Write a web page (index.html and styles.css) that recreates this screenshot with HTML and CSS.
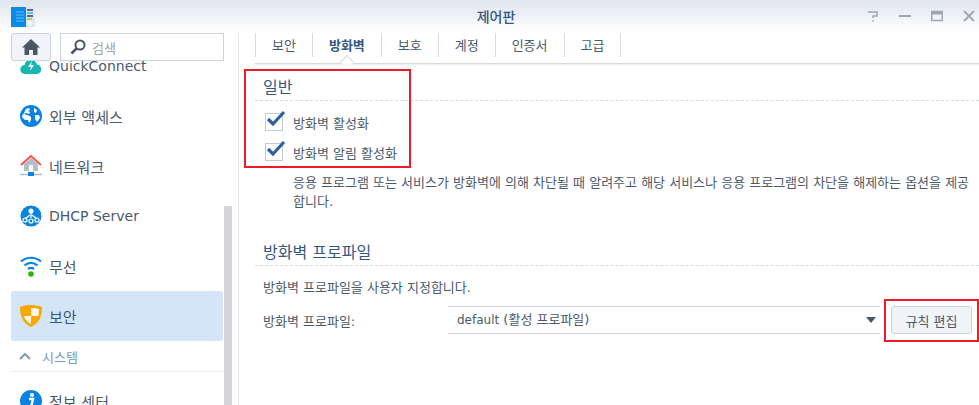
FILE: index.html
```html
<!DOCTYPE html>
<html>
<head>
  <meta charset="utf-8">
  <title>제어판</title>
  <link rel="stylesheet" href="styles.css">
</head>
<body>
  <div class="window">
    <header class="titlebar">
      <svg class="app-logo" width="24" height="20" viewBox="0 0 24 20">
        <rect x="0" y="0" width="15" height="20" fill="#0a8be8"/>
        <path d="M5 5h8M5 8h8M5 11h8M5 14h8" stroke="#5cc0fa" stroke-width="1"/>
        <rect x="15" y="0" width="9" height="20" fill="#dfe5ea"/>
        <path d="M16 3h6" stroke="#334" stroke-width="1.4"/>
        <path d="M16 6h6" stroke="#19b5ef" stroke-width="1.4"/>
        <path d="M16 9h6" stroke="#334" stroke-width="1.4"/>
        <path d="M16 12h5" stroke="#8c4" stroke-width="1.4"/>
        <circle cx="19" cy="16" r="2.6" fill="#f4f8fb"/>
      </svg>
      <div class="title">제어판</div>
      <div class="win-buttons">
        <svg width="12" height="12" viewBox="0 0 12 12"><path d="M1 2h9v4H6v2M6 10v1.500" fill="none" stroke="#a0a6ae" stroke-width="1.500"/></svg>
        <svg width="12" height="12" viewBox="0 0 12 12"><path d="M0 6h12" stroke="#a0a6ae" stroke-width="2"/></svg>
        <svg width="12" height="12" viewBox="0 0 12 12"><rect x="0.750" y="1.500" width="10.500" height="9" fill="none" stroke="#a0a6ae" stroke-width="1.500"/><path d="M0 3h12" stroke="#a0a6ae" stroke-width="3"/></svg>
        <svg width="12" height="12" viewBox="0 0 12 12"><path d="M1 1l10 10M11 1L1 11" stroke="#a0a6ae" stroke-width="1.800"/></svg>
      </div>
    </header>

    <div class="main">
      <aside class="sidebar">
        <div class="side-col">
          <div class="side-top">
            <button class="home-btn">
              <svg width="18" height="16" viewBox="0 0 18 16"><path d="M9 0L0 8.500h2.500V16h4.500v-5h4v5h4.500V8.500H18z" fill="#4c5662"/></svg>
            </button>
            <div class="search">
              <svg width="16" height="16" viewBox="0 0 16 16"><circle cx="10" cy="6" r="4.500" fill="none" stroke="#4c5662" stroke-width="2"/><path d="M6.500 9.500L1.500 14.500" stroke="#4c5662" stroke-width="2.600"/></svg>
              <span>검색</span>
            </div>
          </div>
          <ul class="nav">
            <li class="nav-item latin">
              <svg width="22" height="22" viewBox="0 0 22 22"><path d="M5 19a4.500 4.500 0 0 1-.5-9 6.500 6.500 0 0 1 12.500-.5 4.800 4.800 0 0 1 0 9.500z" fill="#14b8b0"/><path d="M12 6l-4 6h3l-1 4 4-6h-3z" fill="#fff"/></svg>
              QuickConnect
            </li>
            <li class="nav-item">
              <svg width="22" height="22" viewBox="0 0 22 22"><circle cx="11" cy="11" r="11" fill="#0a84e0"/><path d="M6 4l3-1 1 2-2 1 2 1-1 2-3-1-3 1-1 3 3 3 3 0 1 3 2-3 0-3-3-2-2 0-2-2zM14 3l3 2-1 3-2-1zM15 10l4 0 1 3-3 4-2-3z" fill="#fff"/></svg>
              외부 액세스
            </li>
            <li class="nav-item">
              <svg width="22" height="22" viewBox="0 0 22 22"><path d="M4 9v7h14V9l-7-6z" fill="#b4bec8"/><path d="M1 10l10-9 10 9" fill="none" stroke="#f0554f" stroke-width="2"/><rect x="9" y="10" width="4" height="6" fill="#fff"/><path d="M0 19.500h22" stroke="#b4bec8" stroke-width="1.500"/><rect x="8" y="17" width="6" height="4" fill="#0a84e0"/></svg>
              네트워크
            </li>
            <li class="nav-item latin">
              <svg width="22" height="22" viewBox="0 0 22 22"><circle cx="11" cy="11" r="10.500" fill="#0a84e0"/><g fill="none" stroke="#fff" stroke-width="1.200"><path d="M11 8v5M10 10l-5 4M12 10l5 4"/><circle cx="5" cy="15" r="2"/><circle cx="11" cy="16" r="2"/><circle cx="17" cy="15" r="2"/></g><circle cx="11" cy="6" r="2.500" fill="#fff"/></svg>
              DHCP Server
            </li>
            <li class="nav-item">
              <svg width="22" height="22" viewBox="0 0 22 22"><g fill="none" stroke="#0a84e0" stroke-width="2.200"><path d="M1 6.500c6-5 14-5 20 0"/><path d="M4.500 10.500c4-3.400 9-3.400 13 0"/><path d="M8 14c1.800-1.300 4.200-1.300 6 0"/></g><circle cx="11" cy="19" r="2.800" fill="#2fb310"/></svg>
              무선
            </li>
            <li class="nav-item nav-active">
              <svg width="24" height="24" viewBox="0 0 24 24"><path d="M12 1c4 0 7 .5 11 2 0 8-2 16-11 20C3 19 1 11 1 3c4-1.500 7-2 11-2z" fill="#f9a800"/><path d="M12 4c3 0 5 .3 8 1 0 2.500-.1 4.500-.6 7H12zM12 12v8c-3.500-2-6-4.500-7.400-8z" fill="#fff8e8"/></svg>
              보안
            </li>
            <li class="nav-group">
              <svg width="12" height="8" viewBox="0 0 12 8"><path d="M1 7l5-5 5 5" fill="none" stroke="#7d9ab5" stroke-width="2"/></svg>
              시스템
            </li>
            <li class="nav-item nav-last">
              <svg width="22" height="22" viewBox="0 0 22 22"><circle cx="11" cy="11" r="11" fill="#0a84e0"/><circle cx="12" cy="5" r="2" fill="#fff"/><path d="M9 9h4l-2 8h2" fill="none" stroke="#fff" stroke-width="2.400"/></svg>
              정보 센터
            </li>
          </ul>
        </div>
        <div class="scroll-track"><div class="scroll-thumb"></div></div>
      </aside>

      <section class="content">
        <nav class="tabs">
          <div class="tab">보안</div>
          <div class="tab tab-on">방화벽</div>
          <div class="tab">보호</div>
          <div class="tab">계정</div>
          <div class="tab">인증서</div>
          <div class="tab">고급</div>
        </nav>

        <h2 class="section-title first">일반</h2>
        <div class="checks">
          <label class="check"><span class="box"><svg width="20" height="18" viewBox="0 0 20 18"><path d="M2 9l5 5L18 2" fill="none" stroke="#2f5f9e" stroke-width="3.200"/></svg></span>방화벽 활성화</label>
          <label class="check"><span class="box"><svg width="20" height="18" viewBox="0 0 20 18"><path d="M2 9l5 5L18 2" fill="none" stroke="#2f5f9e" stroke-width="3.200"/></svg></span>방화벽 알림 활성화</label>
        </div>
        <p class="desc">응용 프로그램 또는 서비스가 방화벽에 의해 차단될 때 알려주고 해당 서비스나 응용 프로그램의 차단을 해제하는 옵션을 제공합니다.</p>

        <h2 class="section-title second">방화벽 프로파일</h2>
        <p class="note">방화벽 프로파일을 사용자 지정합니다.</p>
        <div class="profile-row">
          <span class="profile-label">방화벽 프로파일:</span>
          <div class="select"><span class="latin-value">default</span> (활성 프로파일)<i class="arrow"></i></div>
          <button class="btn">규칙 편집</button>
        </div>
      </section>
    </div>

    <div class="mark mark-general"></div>
    <div class="mark mark-edit"></div>
  </div>
</body>
</html>
```

FILE: styles.css
```css
* {
  box-sizing: border-box;
}
html, body {
  margin: 0;
  height: 100%;
  overflow: hidden;
}
body {
  font-family: "DejaVu Sans", "Noto Sans CJK KR", sans-serif;
  font-size: 13px;
  color: #4b5a6b;
  background: #fff;
}
.window {
  position: relative;
  width: 979px;
  height: 405px;
  overflow: hidden;
}
.titlebar {
  height: 33px;
  display: flex;
  align-items: center;
  position: relative;
  padding-left: 11px;
  background: linear-gradient(#dfe5ee, #ffffff);
}
.title {
  flex: 1;
  text-align: center;
  font-size: 14px;
  font-weight: 500;
  color: #35577f;
  padding-left: 90px;
  margin-top: -1px;
}
.win-buttons {
  display: flex;
  gap: 20px;
  padding-right: 4px;
  margin-top: -1px;
}
.main {
  display: flex;
  height: 372px;
}
.sidebar {
  width: 239px;
  display: flex;
  flex: none;
  border-right: 1px solid #e6e9ed;
}
.side-col {
  width: 224px;
  flex: none;
  overflow: hidden;
}
.side-top {
  display: flex;
  gap: 9px;
  padding-left: 11px;
  height: 28px;
  position: relative;
  z-index: 1;
}
.home-btn {
  width: 40px;
  height: 28px;
  padding: 0;
  display: flex;
  align-items: center;
  justify-content: center;
  border: 1px solid #c8d3de;
  border-radius: 3px;
  background: #f1f5f9;
}
.search {
  width: 164px;
  height: 28px;
  display: flex;
  align-items: center;
  gap: 6px;
  padding-left: 9px;
  border: 1px solid #c8d3de;
  background: #fff;
  color: #9aa5b1;
  font-size: 13px;
}
.nav {
  list-style: none;
  margin: -20px 0 0;
  padding: 0 0 0 11px;
}
.nav-item {
  height: 50px;
  width: 212px;
  display: flex;
  align-items: center;
  gap: 7px;
  padding-left: 9px;
  font-size: 15px;
  color: #4b5a6b;
  border-radius: 3px;
}
.nav-item.latin {
  font-size: 14px;
}
.nav-active {
  background: #d5e5f8;
  color: #35577f;
  padding-left: 8px;
  gap: 6px;
}
.nav-last {
  margin-top: 4px;
}
.nav-group {
  height: 31px;
  width: 212px;
  display: flex;
  align-items: center;
  gap: 11px;
  padding-left: 8px;
  font-size: 13px;
  color: #7d9ab5;
  border-bottom: 1px solid #e6ecf2;
}
.scroll-track {
  width: 14px;
  background: #fff;
}
.scroll-thumb {
  width: 8px;
  margin-top: 173px;
  height: 199px;
  background: #d3d5d8;
}
.content {
  flex: 1;
  padding: 0 0 0 16px;
  min-width: 0;
}
.tabs {
  display: flex;
  height: 31px;
  border-bottom: 1px solid #d5dbe2;
  box-shadow: 0 1px 1px #eef0f3;
  padding-bottom: 7px;
  position: relative;
}
.tab {
  padding: 0 16px;
  height: 24px;
  line-height: 25px;
  font-size: 13px;
  color: #4b5a6b;
  border-left: 1px solid #d5dee8;
}
.tab:last-child {
  border-right: 1px solid #d5dee8;
}
.tab-on {
  font-weight: 700;
  color: #35577f;
  position: relative;
}
.tab-on::after {
  content: "";
  position: absolute;
  left: 29px;
  bottom: -10px;
  width: 9px;
  height: 9px;
  background: #fff;
  border-left: 1px solid #d5dbe2;
  border-top: 1px solid #d5dbe2;
  transform: rotate(45deg);
}
.section-title {
  margin: 0;
  font-size: 16px;
  font-weight: 400;
  color: #35577f;
  height: 25px;
  line-height: 24px;
  padding-left: 8px;
  border-bottom: 1px dashed #cfdce9;
}
.section-title.first {
  margin-top: 12px;
}
.section-title.second {
  margin-top: 30px;
}
.checks {
  margin-top: 12px;
  padding-left: 10px;
  display: flex;
  flex-direction: column;
  gap: 12px;
}
.check {
  display: flex;
  align-items: center;
  gap: 10px;
  height: 18px;
  font-size: 13px;
}
.box {
  width: 18px;
  height: 18px;
  border: 1px solid #c0ccd8;
  background: #fff;
  position: relative;
}
.box svg {
  position: absolute;
  left: 0;
  top: -4px;
}
.desc {
  margin: 12px 0 0;
  padding: 0 0 0 38px;
  font-size: 13px;
  line-height: 19px;
  width: 722px;
}
.note {
  margin: 12px 0 0;
  padding-left: 8px;
  font-size: 13px;
  line-height: 19px;
}
.profile-row {
  display: flex;
  align-items: center;
  margin-top: 9px;
  padding-left: 8px;
}
.profile-label {
  width: 185px;
  flex: none;
}
.select {
  width: 432px;
  height: 28px;
  line-height: 26px;
  padding-left: 9px;
  border-top: 1px solid #c8d3de;
  border-bottom: 1px solid #c8d3de;
  position: relative;
  flex: none;
}
.latin-value {
  font-size: 12px;
}
.arrow {
  position: absolute;
  right: 4px;
  top: 10px;
  border-left: 5px solid transparent;
  border-right: 5px solid transparent;
  border-top: 6px solid #4c5662;
}
.btn {
  margin-left: 11px;
  width: 81px;
  height: 28px;
  padding: 0;
  border: 1px solid #c8d3de;
  border-radius: 3px;
  background: #f1f5f9;
  font: inherit;
  color: #4b5a6b;
}
.mark {
  position: absolute;
  border: 2px solid #ed1c24;
}
.mark-general {
  left: 244px;
  top: 69px;
  width: 167px;
  height: 99px;
}
.mark-edit {
  left: 884px;
  top: 299px;
  width: 95px;
  height: 43px;
}
```
